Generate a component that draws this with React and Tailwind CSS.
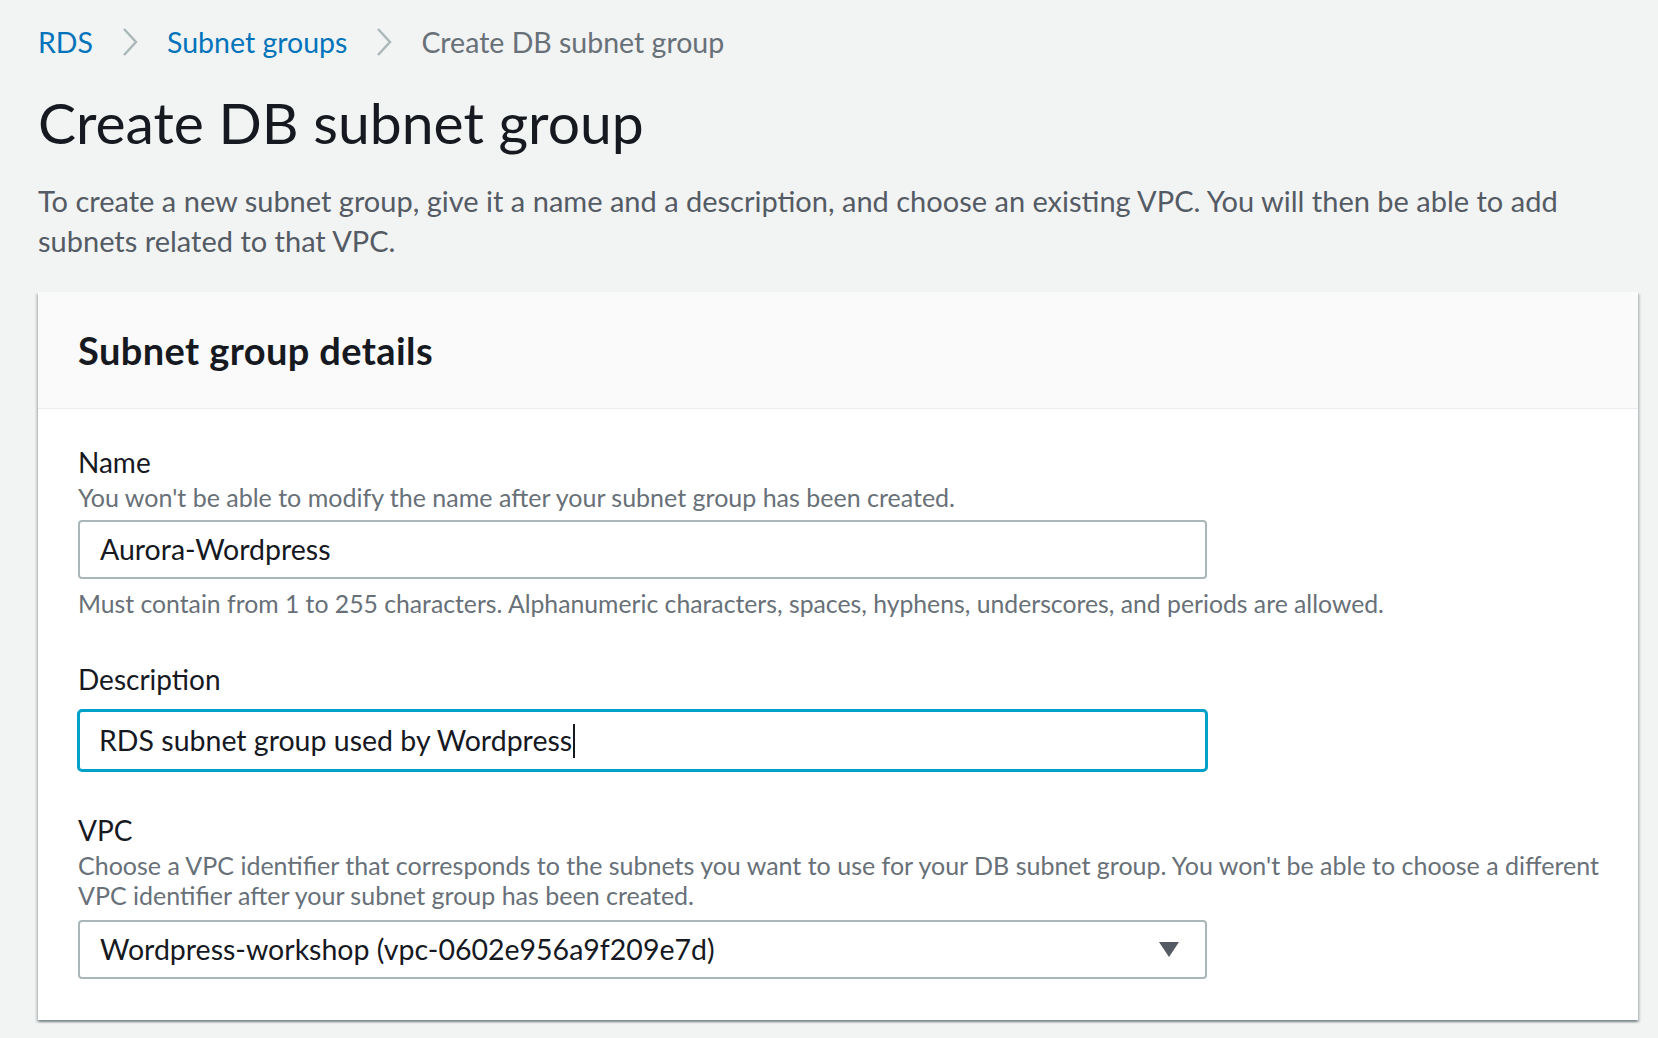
const font = { fontFamily: 'Lato, "Open Sans", sans-serif' };

// chevron between breadcrumb items
const Crumb = () => (
  <svg width="16" height="28" viewBox="0 0 16 28" className="mx-[29px] shrink-0">
    <path d="M2 1 L14 14 L2 27" fill="none" stroke="#aab7b8" strokeWidth="2.4" />
  </svg>
);

const Field = ({ label, hint, children, className = '' }) => (
  <div className={className}>
    <div className="text-[28px] leading-[36px] text-[#16191f]">{label}</div>
    {hint && <div className="text-[25px] leading-[30px] text-[#687078] mt-[2px] whitespace-nowrap">{hint}</div>}
    {children}
  </div>
);

export default function App() {
  return (
    <div style={font} className="min-h-[1038px] bg-[#f2f3f3] pl-[38px] pr-[20px] pt-[22px] pb-[18px]">
      {/* breadcrumbs */}
      <div className="flex items-center h-[40px] text-[28.5px]">
        <span className="text-[#0073bb]">RDS</span>
        <Crumb />
        <span className="text-[#0073bb]">Subnet groups</span>
        <Crumb />
        <span className="text-[#687078]">Create DB subnet group</span>
      </div>

      <h1 className="mt-[26px] text-[57px] leading-[68px] text-[#16191f] font-normal">Create DB subnet group</h1>

      <p className="mt-[25px] text-[29px] leading-[40px] text-[#545b64] whitespace-nowrap">
        To create a new subnet group, give it a name and a description, and choose an existing VPC. You will then be able to add
        <br />
        subnets related to that VPC.
      </p>

      {/* card */}
      <div className="mt-[31px] bg-white shadow-[0_2px_2px_0_rgba(0,28,36,0.3),2px_2px_2px_0_rgba(0,28,36,0.15),-2px_2px_2px_0_rgba(0,28,36,0.15)]">
        <div className="h-[117px] bg-[#fafafa] border-b border-[#eaeded] px-[40px] flex items-center">
          <h2 className="text-[38px] font-bold tracking-[0.4px] text-[#16191f] leading-[44px]">Subnet group details</h2>
        </div>

        <div className="px-[40px] pt-[35px] pb-[41px]">
          <Field label="Name" hint="You won't be able to modify the name after your subnet group has been created.">
            <div className="mt-[8px] w-[1129px] h-[59px] border-2 border-[#aab7b8] rounded-[4px] flex items-center pl-[20px] text-[28.5px] text-[#16191f]">
              Aurora-Wordpress
            </div>
            <div className="mt-[10px] text-[24.75px] leading-[30px] text-[#687078] whitespace-nowrap">
              Must contain from 1 to 255 characters. Alphanumeric characters, spaces, hyphens, underscores, and periods are allowed.
            </div>
          </Field>

          <Field label="Description" className="mt-[42px]">
            <div className="mt-[12px] w-[1131px] -ml-px h-[63px] border-[3px] border-[#00a1c9] rounded-[5px] flex items-center pl-[19px] text-[28.5px] text-[#16191f]">
              <span>RDS subnet group used by Wordpress</span>
              <span className="w-[2px] h-[34px] bg-[#16191f] ml-[1px]" />
            </div>
          </Field>

          <Field
            label="VPC"
            className="mt-[40px]"
            hint={
              <>
                Choose a VPC identifier that corresponds to the subnets you want to use for your DB subnet group. You won't be able to choose a different
                <br />
                VPC identifier after your subnet group has been created.
              </>
            }
          >
            <div className="mt-[10px] w-[1129px] h-[59px] border-2 border-[#aab7b8] rounded-[4px] flex items-center justify-between pl-[20px] pr-[26px] text-[28.5px] text-[#16191f]">
              <span>Wordpress-workshop (vpc-0602e956a9f209e7d)</span>
              <svg width="20" height="15" viewBox="0 0 20 15">
                <path d="M0 0 H20 L10 15 Z" fill="#545b64" />
              </svg>
            </div>
          </Field>
        </div>
      </div>
    </div>
  );
}
